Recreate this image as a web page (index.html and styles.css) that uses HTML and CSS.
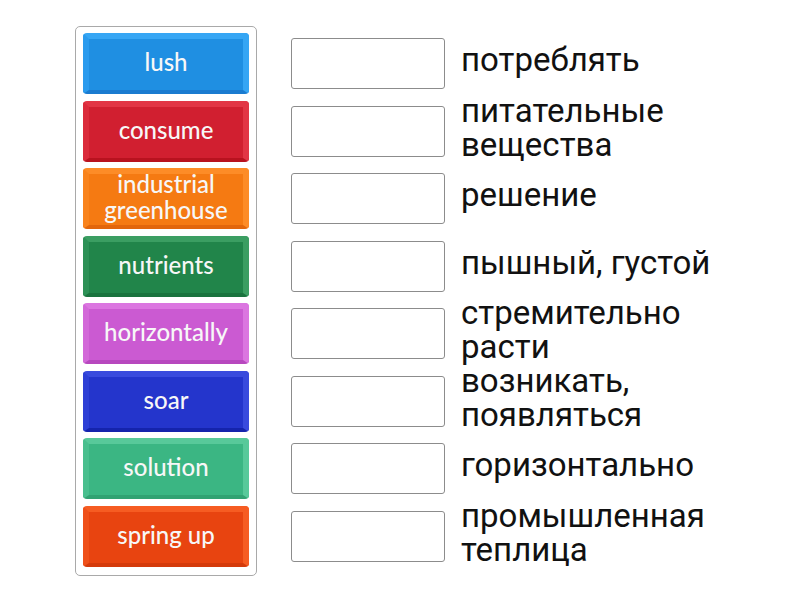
FILE: index.html
```html
<!DOCTYPE html>
<html>
<head>
<meta charset="utf-8">
<link rel="stylesheet" href="styles.css">
</head>
<body>
<div class="page">
  <div class="panel">
    <div class="tile t-blue"><span>lush</span></div>
    <div class="tile t-red"><span>consume</span></div>
    <div class="tile t-orange"><span>industrial greenhouse</span></div>
    <div class="tile t-green"><span>nutrients</span></div>
    <div class="tile t-violet"><span>horizontally</span></div>
    <div class="tile t-navy"><span>soar</span></div>
    <div class="tile t-mint"><span>solution</span></div>
    <div class="tile t-flame"><span>spring up</span></div>
  </div>
  <div class="targets">
    <div class="row"><div class="slot"></div><div class="def">потреблять</div></div>
    <div class="row"><div class="slot"></div><div class="def">питательные вещества</div></div>
    <div class="row"><div class="slot"></div><div class="def">решение</div></div>
    <div class="row"><div class="slot"></div><div class="def">пышный, густой</div></div>
    <div class="row"><div class="slot"></div><div class="def">стремительно расти</div></div>
    <div class="row"><div class="slot"></div><div class="def">возникать, появляться</div></div>
    <div class="row"><div class="slot"></div><div class="def">горизонтально</div></div>
    <div class="row"><div class="slot"></div><div class="def">промышленная теплица</div></div>
  </div>
</div>
</body>
</html>
```

FILE: styles.css
```css
html, body {
  margin: 0;
  padding: 0;
  background: #ffffff;
}

.page {
  display: flex;
  align-items: flex-start;
  padding: 26px 0 0 75px;
}

.panel {
  display: flex;
  flex-direction: column;
  gap: 6.5px;
  width: 166px;
  padding: 6px 7px 8px 7px;
  border: 1px solid #a9a9a9;
  border-radius: 5px;
}

.tile {
  box-sizing: border-box;
  height: 61px;
  border-radius: 4px;
  border-style: solid;
  border-width: 6px 6px 4px 6px;
  display: flex;
  align-items: center;
  justify-content: center;
  text-align: center;
  color: #f7f7f7;
  font-family: "Lato", "Open Sans", sans-serif;
  font-size: 24px;
  font-weight: 500;
  line-height: 26px;
  padding: 0 0 5px 0;
  margin: 0;
}

.t-blue   { background: #1f8fe2; border-color: #36a6f4 #36a6f4 #1a7bd0 #2a9bee; }
.t-red    { background: #d11f30; border-color: #e23545 #e23545 #b8121f #db2b3b; }
.t-orange { background: #f57a12; border-color: #fd8c27 #fd8c27 #e2660b #f9831c; }
.t-green  { background: #21854a; border-color: #3b9e62 #3b9e62 #1a733e #2d9156; }
.t-violet { background: #cb5ad2; border-color: #db76e0 #db76e0 #b748be #d368d9; }
.t-navy   { background: #2435cc; border-color: #394bdd #394bdd #1524ac #2e40d6; }
.t-mint   { background: #3bb683; border-color: #58c99a #58c99a #31a272 #49bf8e; }
.t-flame  { background: #e84410; border-color: #f65c22 #f65c22 #d43a0b #ef501a; }

.tile span {
  margin: 0 -6px;
}

.targets {
  display: flex;
  flex-direction: column;
  gap: 6.5px;
  margin-top: 7px;
  margin-left: 34px;
}

.row {
  height: 61px;
  display: flex;
  align-items: center;
  gap: 16px;
}

.slot {
  box-sizing: border-box;
  width: 154px;
  height: 51px;
  flex: none;
  border: 1.5px solid #8c8c8c;
  border-radius: 3px;
  background: #fff;
}

.def {
  width: 280px;
  font-family: "Roboto", "Liberation Sans", sans-serif;
  font-size: 33px;
  line-height: 34px;
  color: #111111;
  margin-top: -7px;
}
```
